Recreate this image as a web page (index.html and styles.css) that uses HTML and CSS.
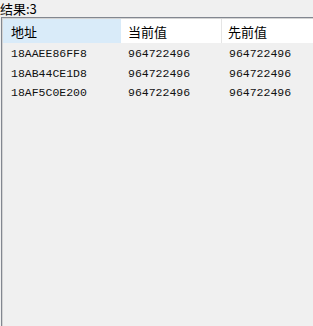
FILE: index.html
```html
<!DOCTYPE html>
<html lang="zh">

<head>
	<meta charset="utf-8" />
	<title>结果</title>
	<link rel="stylesheet" href="styles.css">
</head>

<body>
	<div class="result-label">结果:3</div>
	<div class="list-view">
		<div class="list-row list-header">
			<span class="col col-addr selected">地址</span>
			<span class="col col-cur">当前值</span>
			<span class="col col-prev">先前值</span>
		</div>
		<div class="list-body">
			<div class="list-row">
				<span class="col col-addr">18AAEE86FF8</span>
				<span class="col col-cur">964722496</span>
				<span class="col col-prev">964722496</span>
			</div>
			<div class="list-row">
				<span class="col col-addr">18AB44CE1D8</span>
				<span class="col col-cur">964722496</span>
				<span class="col col-prev">964722496</span>
			</div>
			<div class="list-row">
				<span class="col col-addr">18AF5C0E200</span>
				<span class="col col-cur">964722496</span>
				<span class="col col-prev">964722496</span>
			</div>
		</div>
	</div>
</body>

</html>
```

FILE: styles.css
```css
html,
body {
	margin: 0;
	height: 100%;
	background: #f0f0f0;
	overflow: hidden;
}

body {
	display: flex;
	flex-direction: column;
	font-family: "Noto Sans CJK SC", "DejaVu Sans", sans-serif;
	color: #000;
}

.result-label {
	height: 17px;
	line-height: 17px;
	font-size: 13px;
}

.list-view {
	flex: 1;
	margin-left: 1px;
	border-top: 1px solid #828790;
	border-left: 1px solid #828790;
	box-shadow: inset 1px 1px 0 #d4d4d4;
	padding: 1px 0 0 1px;
}

.list-body {
	padding-top: 1px;
}

.list-row {
	display: flex;
	height: 19.5px;
	align-items: center;
	font-family: "Liberation Mono", monospace;
	font-size: 11.5px;
	color: #111;
}

.list-header {
	height: 24px;
	background: #fff;
	font-family: "Noto Sans CJK SC", sans-serif;
	font-size: 13px;
	align-items: stretch;
	color: #000;
}

.col {
	display: flex;
	align-items: center;
	box-sizing: border-box;
	padding-left: 8px;
	white-space: nowrap;
}

.col-addr {
	width: 118px;
}

.col-cur {
	width: 101px;
	padding-left: 7px;
}

.col-prev {
	flex: 1;
	padding-left: 7px;
}

.list-header .col-cur {
	border-right: 1px solid #e5e5e5;
}

.list-header .col-prev {
	padding-left: 6px;
}

.list-header .selected {
	background: #d9ebf9;
}
```
